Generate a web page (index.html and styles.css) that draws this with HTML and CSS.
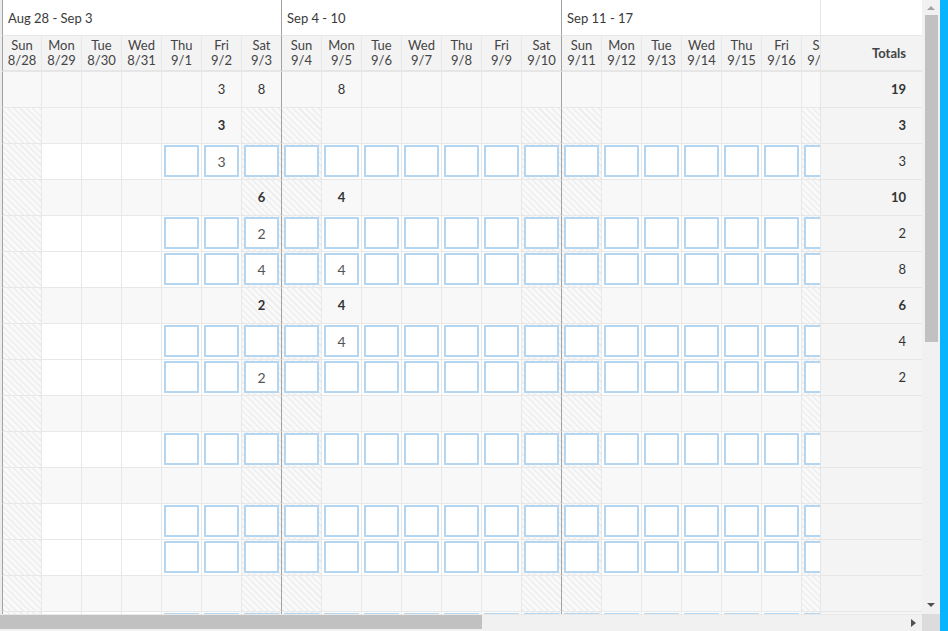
FILE: index.html
```html
<!DOCTYPE html>
<html lang="en">
  <head>
    <meta charset="UTF-8" />
    <meta name="viewport" content="width=device-width, initial-scale=1.0" />
    <title>Timesheet</title>
    <link rel="stylesheet" href="styles.css">
  </head>
  <body>
    <div class="screen">
      <div class="main">
        <div class="grid">
          <div class="days">
            <div class="row weeks">
              <div class="week">Aug 28 - Sep 3</div>
              <div class="week">Sep 4 - 10</div>
              <div class="week">Sep 11 - 17</div>
            </div>
            <div class="row dayhead" id="dayhead"></div>
            <div id="body"></div>
          </div>
          <div class="totals" id="totals">
            <div class="tcell blank"></div>
            <div class="tcell thead">Totals</div>
          </div>
        </div>
        <div class="hscroll">
          <div class="hthumb"></div>
          <span class="arrow-right"></span>
        </div>
      </div>
      <div class="vscroll">
        <div class="vtrack">
          <span class="arrow-up"></span>
          <div class="vthumb"></div>
          <span class="arrow-down"></span>
        </div>
        <div class="corner"></div>
      </div>
      <div class="accent"></div>
    </div>
    <script src="script.js"></script>
  </body>
</html>
```

FILE: styles.css
```css
* {
  margin: 0;
  padding: 0;
  box-sizing: border-box;
}

body {
  font-family: Lato, "Liberation Sans", sans-serif;
  font-size: 13px;
  color: #333;
  background-color: #fff;
}

/*STRUCTURE*/
.screen {
  display: flex;
  width: 948px;
  height: 631px;
  overflow: hidden;
}

.main {
  width: 922px;
  display: flex;
  flex-direction: column;
}

.grid {
  height: 614px;
  display: flex;
  overflow: hidden;
}

.days {
  width: 820px;
  flex: none;
  overflow: hidden;
  border-left: 2px solid #ececec;
}

.row {
  display: flex;
  width: max-content;
  height: 36px;
}

/*HEADER*/
.week {
  width: 280px;
  height: 36px;
  padding-left: 5px;
  display: flex;
  align-items: center;
  border-right: 1px solid #a2a2a2;
  border-bottom: 1px solid #e6e6e6;
  color: #3a3a3a;
}

.week:first-child {
  border-left: 1px solid #a2a2a2;
}

.dayhead .cell {
  flex-direction: column;
  background-color: #f3f3f3;
  border-bottom: 2px solid #e6e6e6;
  line-height: 15px;
  padding-top: 1px;
  color: #444;
}

/*CELLS*/
.cell {
  flex: none;
  width: 40px;
  height: 36px;
  display: flex;
  align-items: center;
  justify-content: center;
  padding-bottom: 1px;
  border-right: 1px solid #e8e8e8;
  border-bottom: 1px solid #e8e8e8;
}

.cell.sun:first-child {
  border-left: 1px solid #a2a2a2;
}

.cell.sat {
  border-right-color: #a2a2a2;
}

.grand,
.sum {
  background-color: #f8f8f8;
}

.entry {
  background-color: #fff;
}

.sum .cell {
  font-weight: bold;
}

.cell.hatch {
  background: repeating-linear-gradient(45deg, #eeeeee 0 1.5px, #f9f9f9 1.5px 4.5px);
}

.entry .cell {
  align-items: flex-start;
  padding: 1px 0 0;
}

.box {
  width: 35px;
  height: 32px;
  display: flex;
  align-items: center;
  justify-content: center;
  background-color: #fff;
  border: 2px solid #b4d6f1;
  color: #555;
  font-size: 14px;
}

/*TOTALS*/
.totals {
  width: 102px;
  flex: none;
  background-color: #f4f4f4;
  border-left: 1px solid #e6e6e6;
}

.tcell {
  height: 36px;
  display: flex;
  align-items: center;
  justify-content: flex-end;
  padding: 0 16px 1px 0;
  border-bottom: 1px solid #e6e6e6;
}

.tcell.blank {
  background-color: #fff;
}

.tcell.thead {
  background-color: #f3f3f3;
  border-bottom: 2px solid #e6e6e6;
  font-weight: bold;
  color: #444;
}

.tcell.bold {
  font-weight: bold;
}

/*SCROLLBARS*/
.hscroll {
  height: 17px;
  display: flex;
  align-items: flex-start;
  background-color: #f1f1f1;
  border-top: 1px solid #e9e9e9;
  position: relative;
}

.hthumb {
  width: 482px;
  height: 14px;
  background-color: #c1c1c1;
}

.arrow-right {
  position: absolute;
  right: 6px;
  top: 4px;
  border-left: 5px solid #505050;
  border-top: 4px solid transparent;
  border-bottom: 4px solid transparent;
}

.vscroll {
  width: 18px;
  display: flex;
  flex-direction: column;
}

.vtrack {
  flex: 1;
  background-color: #f1f1f1;
  padding: 15px 2px 0 3px;
  position: relative;
}

.vthumb {
  height: 327px;
  background-color: #c1c1c1;
}

.arrow-up {
  position: absolute;
  left: 5px;
  top: 6px;
  border-bottom: 4px solid #a3a3a3;
  border-left: 4px solid transparent;
  border-right: 4px solid transparent;
}

.arrow-down {
  position: absolute;
  left: 5px;
  bottom: 7px;
  border-top: 4px solid #505050;
  border-left: 4px solid transparent;
  border-right: 4px solid transparent;
}

.corner {
  height: 17px;
  background-color: #dcdcdc;
}

.accent {
  width: 8px;
  background-color: #0ab4fc;
}
```

FILE: script.js
```js
const dates = [
  "8/28", "8/29", "8/30", "8/31", "9/1", "9/2", "9/3",
  "9/4", "9/5", "9/6", "9/7", "9/8", "9/9", "9/10",
  "9/11", "9/12", "9/13", "9/14", "9/15", "9/16", "9/17",
];
const names = ["Sun", "Mon", "Tue", "Wed", "Thu", "Fri", "Sat"];

// type: grand = overall total, sum = task total, entry = editable row
const rows = [
  { type: "grand", vals: { 5: "3", 6: "8", 8: "8" }, total: "19" },
  { type: "sum", vals: { 5: "3" }, total: "3" },
  { type: "entry", vals: { 5: "3" }, total: "3" },
  { type: "sum", vals: { 6: "6", 8: "4" }, total: "10" },
  { type: "entry", vals: { 6: "2" }, total: "2" },
  { type: "entry", vals: { 6: "4", 8: "4" }, total: "8" },
  { type: "sum", vals: { 6: "2", 8: "4" }, total: "6" },
  { type: "entry", vals: { 8: "4" }, total: "4" },
  { type: "entry", vals: { 6: "2" }, total: "2" },
  { type: "sum", vals: {}, total: "" },
  { type: "entry", vals: {}, total: "" },
  { type: "sum", vals: {}, total: "" },
  { type: "entry", vals: {}, total: "" },
  { type: "entry", vals: {}, total: "" },
  { type: "sum", vals: {}, total: "" },
  { type: "entry", vals: {}, total: "" },
];

const dayClass = function (i) {
  if (i % 7 === 0) return "sun";
  if (i % 7 === 6) return "sat";
  return "";
};

const dayhead = document.getElementById("dayhead");
dates.forEach((d, i) => {
  const cell = document.createElement("div");
  cell.className = `cell ${dayClass(i)}`;
  cell.innerHTML = `<span>${names[i % 7]}</span><span>${d}</span>`;
  dayhead.appendChild(cell);
});

const body = document.getElementById("body");
const totals = document.getElementById("totals");
rows.forEach((r) => {
  const row = document.createElement("div");
  row.className = `row ${r.type}`;
  dates.forEach((d, i) => {
    const cell = document.createElement("div");
    const day = dayClass(i);
    cell.className = `cell ${day}`;
    if (day && r.type !== "grand") cell.classList.add("hatch");
    const val = r.vals[i] || "";
    if (r.type === "entry" && i >= 4) {
      cell.innerHTML = `<span class="box">${val}</span>`;
    } else {
      cell.textContent = val;
    }
    row.appendChild(cell);
  });
  body.appendChild(row);

  const t = document.createElement("div");
  t.className = r.type === "entry" ? "tcell" : "tcell bold";
  t.textContent = r.total;
  totals.appendChild(t);
});
```
